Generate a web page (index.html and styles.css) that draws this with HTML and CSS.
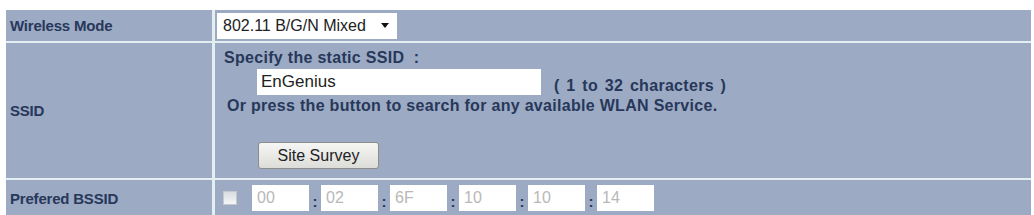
FILE: index.html
```html
<!DOCTYPE html>
<html lang="en">
<head>
    <meta charset="UTF-8">
    <title>Wireless Settings</title>
    <link rel="stylesheet" href="styles.css">
</head>
<body>
    <table class="settings">
        <tr class="row-mode">
            <td class="label">Wireless Mode</td>
            <td class="value">
                <div class="select">
                    <span>802.11 B/G/N Mixed</span>
                    <span class="caret"></span>
                </div>
            </td>
        </tr>
        <tr class="row-ssid">
            <td class="label">SSID</td>
            <td class="value">
                <div class="note">Specify the static SSID &nbsp;:</div>
                <div class="ssid-line">
                    <input class="ssid-input" type="text" value="EnGenius">
                    <span class="note">( 1 to 32 characters )</span>
                </div>
                <div class="note search">Or press the button to search for any available WLAN Service.</div>
                <button class="survey">Site Survey</button>
            </td>
        </tr>
        <tr class="row-bssid">
            <td class="label">Prefered BSSID</td>
            <td class="value">
                <div class="bssid">
                    <span class="check"></span>
                    <input class="mac" type="text" value="00" disabled>
                    <span class="colon">:</span>
                    <input class="mac" type="text" value="02" disabled>
                    <span class="colon">:</span>
                    <input class="mac" type="text" value="6F" disabled>
                    <span class="colon">:</span>
                    <input class="mac" type="text" value="10" disabled>
                    <span class="colon">:</span>
                    <input class="mac" type="text" value="10" disabled>
                    <span class="colon">:</span>
                    <input class="mac" type="text" value="14" disabled>
                </div>
            </td>
        </tr>
    </table>
</body>
</html>
```

FILE: styles.css
```css
body {
    margin: 0;
    padding: 10px 3px 0 6px;
    background: white;
    font-family: "Liberation Sans", Arial, sans-serif;
}

.settings {
    width: 1025px;
    border-collapse: separate;
    border-spacing: 0;
    background: #e4eef0;
}

.settings td {
    background: #9caac4;
    padding: 0;
    vertical-align: middle;
}

.label {
    width: 209px;
    padding-left: 4px !important;
    border-right: 3px solid #e4eef0;
    font-size: 15px;
    font-weight: bold;
    letter-spacing: -0.2px;
    color: #27385a;
    box-sizing: border-box;
}

.row-mode td {
    height: 31px;
    border-bottom: 2px solid #e4eef0;
}

.row-ssid td {
    height: 129px;
    border-bottom: 2px solid #e4eef0;
}

.row-bssid td {
    height: 36px;
}

.value {
    padding-left: 2px !important;
}

.select {
    display: flex;
    align-items: center;
    justify-content: space-between;
    width: 180px;
    height: 26px;
    padding: 0 8px 0 6px;
    box-sizing: border-box;
    background: white;
    font-size: 16px;
    color: #222;
}

.caret {
    width: 0;
    height: 0;
    border-left: 4px solid transparent;
    border-right: 4px solid transparent;
    border-top: 5px solid #111;
}

.row-ssid .value {
    vertical-align: top;
    padding-top: 6px !important;
}

.note {
    font-size: 16px;
    line-height: 18px;
    font-weight: bold;
    letter-spacing: 0.3px;
    color: #27385a;
}

.row-ssid .value > .note:first-child {
    padding-left: 7px;
}

.ssid-line {
    display: flex;
    align-items: flex-end;
    gap: 13px;
    margin-top: 2px;
    padding-left: 40px;
}

.ssid-input {
    width: 284px;
    height: 26px;
    box-sizing: border-box;
    border: none;
    background: white;
    padding: 0 4px;
    font-family: inherit;
    font-size: 17px;
    color: #222;
}

.ssid-line .note {
    word-spacing: 2px;
}

.search {
    padding-left: 10px;
    margin-top: 2px;
}

.survey {
    display: block;
    margin: 27px 0 0 41px;
    width: 121px;
    height: 27px;
    border: 1px solid #8c8c8c;
    border-radius: 3px;
    background: linear-gradient(#f6f6f4, #dcdcd8);
    font-family: inherit;
    font-size: 16px;
    color: #222;
}

.bssid {
    display: flex;
    align-items: center;
    padding-left: 6px;
}

.check {
    width: 12px;
    height: 12px;
    border: 1px solid #c5c9cc;
    background: linear-gradient(#d9dde0, #f4f6f6);
    margin-right: 15px;
}

.mac {
    width: 57px;
    height: 26px;
    box-sizing: border-box;
    border: none;
    background: white;
    padding: 0 5px;
    font-family: inherit;
    font-size: 16px;
    color: #b8b8b8;
}

.colon {
    width: 12px;
    text-align: center;
    font-size: 15px;
    font-weight: bold;
    color: #27385a;
    margin-top: 6px;
}
```
